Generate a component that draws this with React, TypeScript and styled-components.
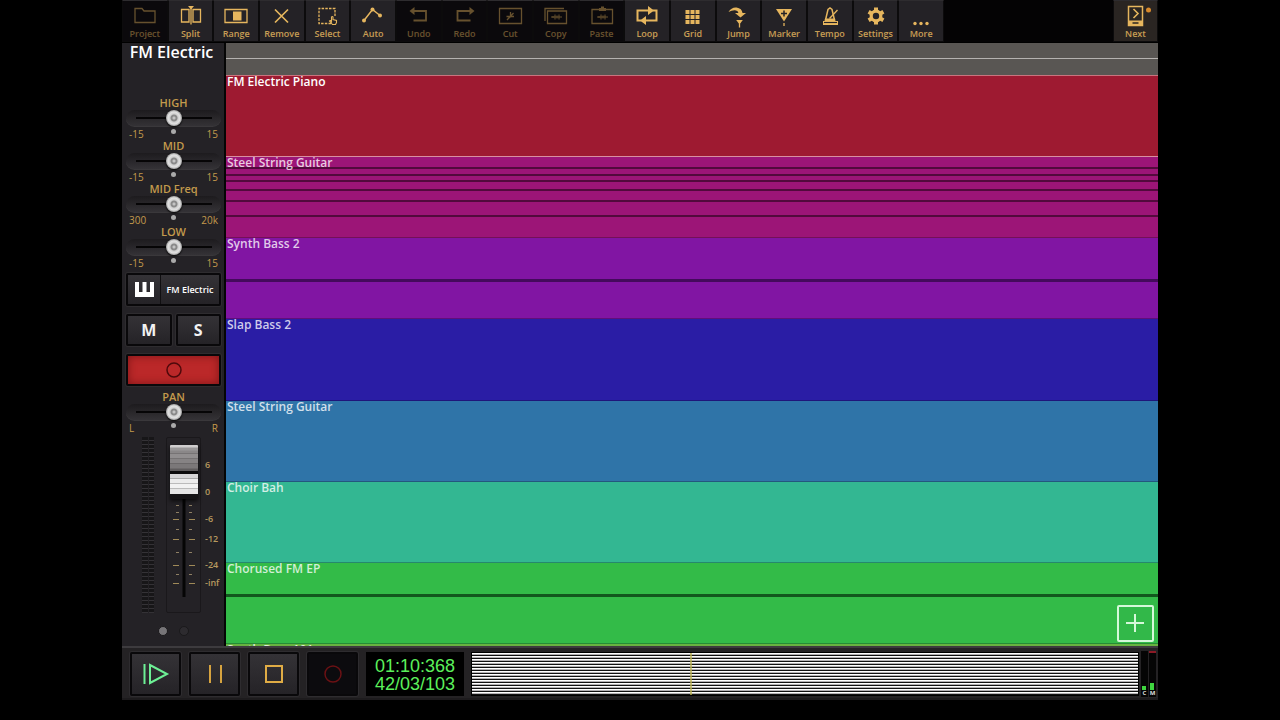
import React from 'react';
import styled, { createGlobalStyle, css } from 'styled-components';

const GOLD = '#e6b65e';
const sans = `"Open Sans", "Noto Sans", sans-serif`;

const GlobalStyle = createGlobalStyle`
  *, *::before, *::after { box-sizing: border-box; }
  body { margin: 0; background: #000; font-family: ${sans}; }
  button { font: inherit; margin: 0; cursor: pointer; }
`;

const Page = styled.div`
  min-height: 100vh;
  padding: 0 122px 20px;
  background: #000;
  display: flex;
  flex-direction: column;
`;

/* ---------- toolbar ---------- */

const Toolbar = styled.header`
  display: flex;
  justify-content: space-between;
  height: 43px;
  background: #040304;
  border-bottom: 1px solid #000;
`;

const ToolGroup = styled.nav`
  display: grid;
  grid-template-columns: repeat(18, 1fr);
  flex: 0 1 822px;
`;

const ToolButton = styled.button<{ $dim?: boolean; $warm?: boolean }>`
  display: flex;
  flex-direction: column;
  align-items: center;
  min-width: 0;
  padding: 0;
  border: 1px solid #0c0b0c;
  border-top-color: #2e2c2f;
  background: ${(p) => (p.$dim ? '#0b090c' : p.$warm ? '#2a2522' : '#242226')};
  color: ${GOLD};

  svg { flex: none; opacity: ${(p) => (p.$dim ? 0.42 : 1)}; }
  span { opacity: ${(p) => (p.$dim ? 0.42 : 0.84)}; }
`;

const ToolLabel = styled.span`
  font-size: 9px;
  line-height: 12px;
  font-weight: 600;
`;

const NextButton = styled(ToolButton)`
  width: 45px;
`;

/* ---------- mixer strip ---------- */

const Workspace = styled.main`
  display: flex;
  height: 603px;
  overflow: hidden;
`;

const Strip = styled.aside`
  display: flex;
  flex-direction: column;
  flex: none;
  width: 104px;
  padding: 0 3px 0 4px;
  background: #242226;
  border-right: 2px solid #050505;
`;

const StripTitle = styled.h1`
  margin: 0;
  height: 52px;
  padding-right: 4px;
  font-size: 16px;
  line-height: 18px;
  font-weight: 600;
  color: #fff;
  text-align: center;
  white-space: nowrap;
`;

const KnobBlock = styled.div`
  display: flex;
  flex-direction: column;
  height: 43px;
  color: #c39a4c;
`;

const KnobLabel = styled.label`
  font-size: 11px;
  line-height: 15px;
  font-weight: 600;
  text-align: center;
`;

const HSlider = styled.input`
  appearance: none;
  width: 100%;
  height: 17px;
  margin: 0;
  border-radius: 9px;
  border-bottom: 1px solid #3a383b;
  background:
    linear-gradient(#060506, #060506) center / 76px 2px no-repeat,
    linear-gradient(#1d1b1e, #343236);

  &::-webkit-slider-thumb {
    appearance: none;
    width: 16px;
    height: 16px;
    border-radius: 50%;
    background: radial-gradient(circle, #c4c4c4 0 1px, #8a8a8a 2px 3px, #cfcfcf 4px, #e2e2e2 6px, #9d9d9d 8px);
    box-shadow: 0 1px 2px #000;
  }
`;

const KnobScale = styled.div`
  display: flex;
  justify-content: space-between;
  height: 11px;
  padding: 0 3px;
  font-size: 10px;
  line-height: 14px;
  font-weight: 500;

  span { flex: 1; }
  span:last-child { text-align: right; }
`;

const CenterDot = styled.i`
  width: 5px;
  height: 5px;
  margin-top: 2px;
  border-radius: 50%;
  background: #aaa;
`;

const ButtonRow = styled.div`
  display: flex;
  gap: 4px;
  margin-top: 8px;
`;

const InstrumentRow = styled(ButtonRow)`
  margin-top: 6px;
`;

const panelFace = css`
  border: 2px solid #09080a;
  border-radius: 2px;
  background: linear-gradient(#343236, #252327);
  box-shadow: 0 0 0 1px #2e2c2f;
`;

const StripButton = styled.button`
  ${panelFace}
  flex: 1;
  height: 32px;
  padding: 0;
  color: #f2f2f2;
  font-size: 16px;
  font-weight: 700;
`;

const Instrument = styled.button`
  ${panelFace}
  display: grid;
  grid-template-columns: 32px 1fr;
  align-items: center;
  justify-items: center;
  width: 100%;
  height: 33px;
  padding: 0;
  color: #fff;
  font-size: 9px;
  font-weight: 600;
  white-space: nowrap;

  span { line-height: 29px; width: 100%; border-left: 1px solid #100f11; }
`;

const ArmButton = styled(StripButton)`
  display: flex;
  align-items: center;
  justify-content: center;
  background: #bb2829;
  box-shadow: inset 0 0 8px #7c1517, 0 0 0 1px #2e2c2f;
`;

const PanBlock = styled(KnobBlock)`
  margin-top: 3px;
`;

const FaderArea = styled.div`
  display: flex;
  height: 176px;
  margin-top: 5px;
  padding-left: 15px;
`;

const LevelMeter = styled.div`
  width: 14px;
  margin-right: 11px;
  background:
    linear-gradient(90deg, #242226 0 1px, transparent 1px 7px, #242226 7px 8px, transparent 8px 13px, #242226 13px),
    repeating-linear-gradient(#171618 0 3px, #343236 3px 4px);
`;

const FaderSlot = styled.div`
  display: grid;
  width: 35px;
  border: 1px solid #1a181b;
  border-radius: 2px;

  > * { grid-area: 1 / 1; }
`;

const Fader = styled.input`
  appearance: none;
  writing-mode: vertical-lr;
  direction: rtl;
  justify-self: center;
  width: 28px;
  height: 174px;
  margin: 0;
  background: transparent;

  &::-webkit-slider-thumb {
    appearance: none;
    width: 28px;
    height: 54px;
    border-radius: 1px;
    background: linear-gradient(
      #d0cecf 0 2px, #9a9899 3px 5px, #8a8788 6px 8px, #767374 8px 9px, #918e8f 9px 13px,
      #757273 13px 14px, #868384 14px 18px, #6b6869 18px 19px, #7b7879 19px 23px, #5f5c5d 24px 26px,
      #0b0a0b 26px 29px, #d6d5d6 29px 33px, #aaa 33px 34px, #ececec 34px 38px, #bbb 38px 39px,
      #f2f2f2 39px 43px, #bbb 43px 44px, #e6e6e6 44px 49px, #151416 49px
    );
    box-shadow: 0 2px 4px rgba(0, 0, 0, 0.7);
  }
`;

const FaderScale = styled.ol`
  display: grid;
  grid-template-rows: 27px 27px 20px 26px 18px 18px;
  margin: 0;
  padding: 22px 0 0 4px;
  list-style: none;
  font-size: 9px;
  line-height: 12px;
  font-weight: 600;
  color: #b7995f;
`;

const PageDots = styled.div`
  display: flex;
  gap: 11px;
  margin-top: 13px;
  padding-left: 32px;
`;

const PageDot = styled.i<{ $on?: boolean }>`
  width: 10px;
  height: 10px;
  border: 1px solid #1a191b;
  border-radius: 50%;
  background: ${(p) => (p.$on ? '#777578' : '#2d2b2f')};
`;

/* ---------- tracks ---------- */

const Arrangement = styled.section`
  position: relative;
  flex: 1;
  min-width: 0;
`;

const Ruler = styled.div`
  height: 33px;
  border-bottom: 1px solid #c9747e;
  background: linear-gradient(#595653 0 15px, #b5b2b0 15px 16px, #595653 16px);
`;

const TrackList = styled.ul`
  display: grid;
  grid-template-rows: repeat(7, 1fr) 16px;
  height: 584px;
  margin: 0;
  padding: 0;
  list-style: none;
`;

const Track = styled.li<{ $color: string; $active?: boolean }>`
  display: flow-root;
  min-height: 0;
  padding-left: 1px;
  background: ${(p) => p.$color};
  border-bottom: 1px solid ${(p) => (p.$active ? '#d98fa0' : 'rgba(0,0,0,0.25)')};
  color: ${(p) => (p.$active ? '#fff' : 'rgba(255,255,255,0.78)')};
  font-size: 12px;
  line-height: 11px;
  font-weight: 600;
`;

const NoteLine = styled.div<{ $gap: number; $shade: string; $thick?: boolean }>`
  height: ${(p) => (p.$thick ? 3 : 2)}px;
  margin: ${(p) => p.$gap}px 0 0 -1px;
  background: ${(p) => p.$shade};
`;

const AddButton = styled.button`
  position: absolute;
  right: 4px;
  bottom: 4px;
  display: flex;
  align-items: center;
  justify-content: center;
  width: 37px;
  height: 37px;
  padding: 0;
  border: 2px solid #d5f8d9;
  border-radius: 2px;
  background: #32b849;
`;

/* ---------- transport ---------- */

const Transport = styled.footer`
  display: flex;
  align-items: center;
  height: 54px;
  padding: 2px 2px 0 8px;
  background: #242224;
  border-top: 2px solid #3d3b3e;
  border-bottom: 2px solid #1d1b1d;
`;

const TransportButton = styled.button<{ $dark?: boolean }>`
  ${panelFace}
  display: flex;
  align-items: center;
  justify-content: center;
  width: 51px;
  height: 44px;
  margin-right: 8px;
  padding: 0;
  ${(p) => p.$dark && css`background: #0c0b0e;`}
`;

const TimeDisplay = styled.output`
  width: 98px;
  height: 44px;
  padding: 5px 0 3px;
  background: #000;
  color: #5cf05c;
  font-family: "Liberation Sans", Arial, sans-serif;
  font-size: 18px;
  line-height: 18px;
  text-align: center;
  white-space: nowrap;
`;

const Overview = styled.div`
  flex: 1;
  height: 44px;
  margin-left: 7px;
  border: 1px solid #000;
  background: repeating-linear-gradient(#fff 0 1px, #b4b1b4 1px 2px, #111 2px 3px);
`;

const Playhead = styled.div`
  width: 2px;
  height: 100%;
  margin-left: 32.8%;
  background: rgba(190, 180, 80, 0.7);
`;

const OutputMeters = styled.div`
  display: flex;
  gap: 1px;
  height: 46px;
  margin-left: 2px;
`;

const OutputMeter = styled.div<{ $level: number; $clip?: boolean }>`
  display: flex;
  flex-direction: column;
  justify-content: flex-end;
  width: 7px;
  background: #050505;
  border-top: 2px solid ${(p) => (p.$clip ? '#8c1a26' : '#050505')};
  color: #ddd;
  font-size: 6px;
  line-height: 7px;
  font-weight: 700;
  text-align: center;

  &::before {
    content: '';
    height: ${(p) => p.$level}px;
    margin: 0 2px 0 1px;
    background: #3fd63f;
  }
`;

/* ---------- icons ---------- */

const line = { fill: 'none', stroke: 'currentColor', strokeWidth: 1.3 };
const solid = { fill: 'currentColor', stroke: 'none' };
const waveform = (
  <path {...line} strokeWidth={1} d="M18 17h11M20 16v2M22 14.5v5M24 15.5v3M26 14.5v5" />
);

const icons: Record<string, React.ReactNode> = {
  Project: <path {...line} d="M13 22.5V8.5h7l2 2.5h11v11.5z" />,
  Split: (
    <>
      <path {...line} d="M13.5 9.5H21V22h-7.5zM25 9.5h7.5V22H25zM23 8v16.5" />
      <path {...solid} d="M20 6h6l-3 3.5z" />
    </>
  ),
  Range: (
    <>
      <path {...line} d="M12 9.5h22v13H12z" />
      <path {...solid} d="M20 11.5h8.5v9H20z" />
    </>
  ),
  Remove: <path {...line} strokeWidth={1.7} d="M16 9.5l13 13M29 9.5l-13 13" />,
  Select: (
    <>
      <path {...line} strokeDasharray="2.5 1.2" d="M26 23.5H14v-15h16v8" />
      <path {...line} fill="#242226" strokeWidth={1.1} d="M26.5 21.5V17q1-1 1.5 0v2.5l3.5 1v2l-1 2h-3l-3-3.5q1-1 2 .5z" />
    </>
  ),
  Auto: (
    <>
      <path {...line} strokeWidth={1.5} d="M14 20.5l8.5-11 7.5 6" />
      <circle {...solid} cx="14" cy="20.5" r="2" />
      <circle {...solid} cx="22.5" cy="9.5" r="2" />
      <circle {...solid} cx="30" cy="15.5" r="2" />
    </>
  ),
  Undo: (
    <>
      <path {...line} strokeWidth={1.8} d="M17 11h13v9.5H17.5" />
      <path {...solid} d="M13.5 11l5-4v8z" />
    </>
  ),
  Redo: (
    <>
      <path {...line} strokeWidth={1.8} d="M28.5 11h-13v9.5h13" />
      <path {...solid} d="M32.5 11l-5-4v8z" />
    </>
  ),
  Cut: (
    <>
      <path {...line} d="M12.5 8.5h22v15h-22z" />
      <path {...line} strokeWidth={1.3} d="M20 20l6.5-7M23.5 12v5.5M19.5 16.5h7.5" />
    </>
  ),
  Copy: (
    <>
      <path {...line} d="M14.5 11h19v12.5h-19zM12 21V8.5h19" />
      {waveform}
    </>
  ),
  Paste: (
    <>
      <path {...line} d="M13 9.5h20.5v14H13z" />
      <path {...solid} d="M20 8h2V6.5h3V8h2v3h-7z" />
      {waveform}
    </>
  ),
  Loop: (
    <>
      <path {...line} strokeWidth={2} d="M17.5 20.5H13.500v-10h11.500M28.500 10.500h4v10H21" />
      <path {...solid} d="M24 6l6 4.5-6 4.5zM22 16l-6 4.5 6 4.5z" />
    </>
  ),
  Grid: (
    <path
      {...solid}
      d="M15.5 10h4v4h-4zM20.5 10h4v4h-4zM25.5 10h4v4h-4zM15.5 15h4v4h-4zM20.5 15h4v4h-4zM25.5 15h4v4h-4zM15.5 20h4v4h-4zM20.5 20h4v4h-4zM25.5 20h4v4h-4z"
    />
  ),
  Jump: (
    <>
      <path {...solid} d="M12.5 12q3-5 8-4.5 5.500.8 6 5.500h3.500l-5.500 4.500-5.500-4.500h3.500q-.5-2.500-3.500-2.800-3-.2-6.500 1.800z" />
      <path {...solid} d="M20.2 20h6.6l-3.3 4.5z" />
      <path {...line} d="M23.5 24v3.5" />
    </>
  ),
  Marker: (
    <>
      <path {...solid} d="M15 9h16l-8 12.5z" />
      <path d="M23 10.5v6M20 13.5h6" stroke="#242226" strokeWidth={1.5} />
      <path {...line} d="M23 23v3" />
    </>
  ),
  Tempo: (
    <>
      <path {...line} strokeWidth={1.5} d="M18.5 20l2.5-10.5 2-1.500 2 1.500L27.5 20" />
      <path {...solid} d="M18 18.5h10l.5 2.5H31v4H16v-4h1.500z" />
      <path {...line} strokeWidth={1.1} d="M17 22.5h13" stroke="#242226" />
      <path {...line} d="M22.5 18.5l8-8.5" />
    </>
  ),
  Settings: (
    <>
      <circle cx="23" cy="16" r="4.8" fill="none" stroke="currentColor" strokeWidth={3.2} />
      <path stroke="currentColor" strokeWidth={4} d="M23 7.5V11M23 21v3.5M15.6 11.8l3 1.7M27.4 18.5l3 1.7M15.6 20.2l3-1.7M27.4 13.5l3-1.7" />
    </>
  ),
  More: (
    <>
      <circle {...solid} cx="17" cy="23.5" r="1.7" />
      <circle {...solid} cx="23" cy="23.5" r="1.7" />
      <circle {...solid} cx="29" cy="23.5" r="1.7" />
    </>
  ),
  Next: (
    <>
      <path {...line} strokeWidth={1.5} d="M15.5 6.5h14v19h-14z" />
      <path {...solid} d="M15.5 20.5h14v5h-14z" />
      <path d="M19.5 23h6" stroke="#2a2522" strokeWidth={1.5} />
      <path {...line} strokeWidth={1.6} d="M20.5 9l4.5 4.5-4.5 4.5" />
      <circle cx="35.5" cy="10" r="2.5" fill="#d98a2b" />
    </>
  ),
};

const disabledTools = ['Project', 'Undo', 'Redo', 'Cut', 'Copy', 'Paste'];

function Tool({ name }: { name: string }) {
  const Button = name === 'Next' ? NextButton : ToolButton;
  return (
    <Button type="button" $dim={disabledTools.includes(name)} $warm={name === 'Next'}>
      <svg width="44" height="27" viewBox="1 1 44 27" aria-hidden="true">{icons[name]}</svg>
      <ToolLabel>{name}</ToolLabel>
    </Button>
  );
}

const tools = [
  'Project', 'Split', 'Range', 'Remove', 'Select', 'Auto', 'Undo', 'Redo', 'Cut',
  'Copy', 'Paste', 'Loop', 'Grid', 'Jump', 'Marker', 'Tempo', 'Settings', 'More',
];

const bands = [
  { label: 'HIGH', low: '-15', high: '15' },
  { label: 'MID', low: '-15', high: '15' },
  { label: 'MID Freq', low: '300', high: '20k' },
  { label: 'LOW', low: '-15', high: '15' },
];

const tracks = [
  { name: 'FM Electric Piano', color: '#9e1a31', shade: '', gaps: [] },
  { name: 'Steel String Guitar', color: '#9c1577', shade: '#520a3c', gaps: [-1, 5, 4, 7, 9, 13] },
  { name: 'Synth Bass 2', color: '#8115a3', shade: '#440a5c', gaps: [30] },
  { name: 'Slap Bass 2', color: '#2a1da5', shade: '', gaps: [] },
  { name: 'Steel String Guitar', color: '#2f74a8', shade: '', gaps: [] },
  { name: 'Choir Bah', color: '#33b792', shade: '', gaps: [] },
  { name: 'Chorused FM EP', color: '#33bb48', shade: '#12571d', gaps: [20] },
  { name: 'Synth Bass 101', color: '#68b340', shade: '', gaps: [] },
];

const majorTicks = [54, 81, 101, 127, 145];
const minorTicks = [67, 74, 91, 114, 136];

function Knob({ label, low, high }: { label: string; low: string; high: string }) {
  const id = label.replace(' ', '-');
  return (
    <>
      <KnobLabel htmlFor={id}>{label}</KnobLabel>
      <HSlider id={id} type="range" min={-15} max={15} defaultValue={0} />
      <KnobScale>
        <span>{low}</span>
        <CenterDot />
        <span>{high}</span>
      </KnobScale>
    </>
  );
}

export default function App() {
  return (
    <Page>
      <GlobalStyle />
      <Toolbar>
        <ToolGroup>
          {tools.map((name) => <Tool key={name} name={name} />)}
        </ToolGroup>
        <Tool name="Next" />
      </Toolbar>

      <Workspace>
        <Strip>
          <StripTitle>FM Electric</StripTitle>
          {bands.map((band) => (
            <KnobBlock key={band.label}><Knob {...band} /></KnobBlock>
          ))}
          <InstrumentRow>
            <Instrument type="button">
              <svg width="19" height="15" viewBox="0 0 19 15" aria-hidden="true">
                <path fill="#fff" d="M0 0h4v10h3.500V0h4v10H15V0h4v15H0z" />
              </svg>
              <span>FM Electric</span>
            </Instrument>
          </InstrumentRow>
          <ButtonRow>
            <StripButton type="button">M</StripButton>
            <StripButton type="button">S</StripButton>
          </ButtonRow>
          <ButtonRow>
            <ArmButton type="button" aria-label="Arm recording">
              <svg width="16" height="16" viewBox="0 0 16 16" aria-hidden="true">
                <circle cx="8" cy="8" r="7" fill="none" stroke="#4f090b" strokeWidth={1.5} />
              </svg>
            </ArmButton>
          </ButtonRow>
          <PanBlock><Knob label="PAN" low="L" high="R" /></PanBlock>
          <FaderArea>
            <LevelMeter />
            <FaderSlot>
              <svg width="33" height="174" viewBox="1 0 33 174" aria-hidden="true">
                <path d="M18 50v109" stroke="#050505" strokeWidth={3} />
                <path stroke="#a08a58" strokeWidth={1} d={majorTicks.map((y) => `M7 ${y + 0.5}h6M23 ${y + 0.5}h6`).join('')} />
                <path stroke="#8f8064" strokeWidth={1} d={minorTicks.map((y) => `M10 ${y + 0.5}h3M23 ${y + 0.5}h3`).join('')} />
              </svg>
              <Fader type="range" min={0} max={120} defaultValue={113} aria-label="Track volume" />
            </FaderSlot>
            <FaderScale>
              {['6', '0', '-6', '-12', '-24', '-inf'].map((mark) => <li key={mark}>{mark}</li>)}
            </FaderScale>
          </FaderArea>
          <PageDots>
            <PageDot $on />
            <PageDot />
          </PageDots>
        </Strip>

        <Arrangement>
          <Ruler />
          <TrackList>
            {tracks.map((track, i) => (
              <Track key={i} $color={track.color} $active={i === 0}>
                {track.name}
                {track.gaps.map((gap, n) => (
                  <NoteLine key={n} $gap={gap} $shade={track.shade} $thick={track.gaps.length === 1} />
                ))}
              </Track>
            ))}
          </TrackList>
          <AddButton type="button" aria-label="Add track">
            <svg width="19" height="19" viewBox="0 0 19 19" aria-hidden="true">
              <path d="M9 0v18M0 9h18" stroke="#d5f8d9" strokeWidth={2} />
            </svg>
          </AddButton>
        </Arrangement>
      </Workspace>

      <Transport>
        <TransportButton type="button" aria-label="Play">
          <svg width="28" height="24" viewBox="0 0 28 24" aria-hidden="true">
            <path d="M2.5 2v20M8 3v18l17-9z" fill="none" stroke="#6df095" strokeWidth={2} />
          </svg>
        </TransportButton>
        <TransportButton type="button" aria-label="Pause">
          <svg width="14" height="18" viewBox="0 0 14 18" aria-hidden="true">
            <path d="M2 0v18M13 0v18" stroke="#d6a33f" strokeWidth={2} />
          </svg>
        </TransportButton>
        <TransportButton type="button" aria-label="Stop">
          <svg width="18" height="18" viewBox="0 0 18 18" aria-hidden="true">
            <path d="M1 1h16v16H1z" fill="none" stroke="#e0ac45" strokeWidth={2} />
          </svg>
        </TransportButton>
        <TransportButton type="button" $dark aria-label="Record">
          <svg width="18" height="18" viewBox="0 0 18 18" aria-hidden="true">
            <circle cx="9" cy="9" r="8" fill="none" stroke="#6b1114" strokeWidth={1.5} />
          </svg>
        </TransportButton>
        <TimeDisplay>
          <div>01:10:368</div>
          <div>42/03/103</div>
        </TimeDisplay>
        <Overview><Playhead /></Overview>
        <OutputMeters>
          <OutputMeter $level={4}>C</OutputMeter>
          <OutputMeter $level={7} $clip>M</OutputMeter>
        </OutputMeters>
      </Transport>
    </Page>
  );
}
